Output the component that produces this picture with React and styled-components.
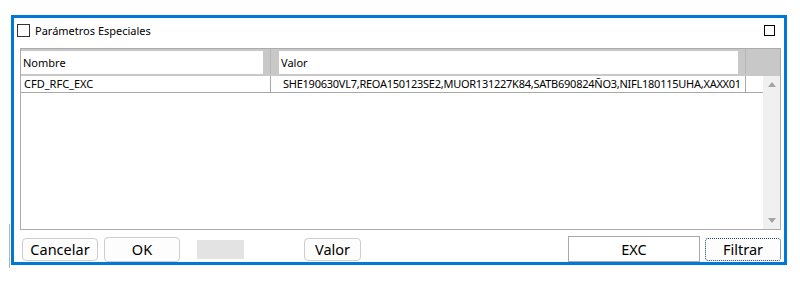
import styled, { createGlobalStyle } from "styled-components";

const GlobalStyle = createGlobalStyle`
  html, body {
    margin: 0;
    padding: 0;
    background: #ffffff;
  }
  body {
    font-family: "Noto Sans", "Open Sans", sans-serif;
    color: #000000;
  }
`;

const Page = styled.div`
  width: 800px;
  height: 281px;
  padding: 15px 0 0 11px;
  box-sizing: border-box;
`;

const Window = styled.div`
  position: relative;
  width: 776px;
  height: 250px;
  box-sizing: border-box;
  border: 3px solid #0078d7;
  background: #ffffff;
  display: flex;
  flex-direction: column;

  &::before {
    content: "";
    position: absolute;
    left: -5px;
    top: 206px;
    width: 1px;
    height: 44px;
    background: #b4b4b4;
  }
`;

const TitleBar = styled.div`
  height: 25px;
  margin-bottom: 5px;
  padding: 0 9px 0 3px;
  display: flex;
  align-items: center;
  gap: 5px;
`;

const CheckBox = styled.span`
  width: 11px;
  height: 11px;
  border: 1px solid #333333;
  background: #ffffff;
`;

const Title = styled.span`
  flex: 1;
  font-size: 11px;
  line-height: 14px;
`;

const MaxBox = styled.span`
  width: 9px;
  height: 9px;
  border: 1px solid #000000;
`;

const Table = styled.div`
  height: 182px;
  margin: 0 3px 0 6px;
  border: 1px solid #ababab;
  box-sizing: border-box;
  display: flex;
  flex-direction: column;
`;

const HeaderRow = styled.div`
  height: 27px;
  flex: none;
  background: #c8c8c8;
  display: flex;
  align-items: flex-start;
  padding-top: 2px;
  box-sizing: border-box;
`;

const HeaderCell = styled.div`
  width: ${(p) => p.$w}px;
  height: 23px;
  background: #ffffff;
  font-size: 11px;
  line-height: 23px;
  padding-left: 2px;
  box-sizing: border-box;
`;

const HeaderGap = styled.div`
  width: ${(p) => p.$w}px;
  height: 25px;
  margin-top: -2px;
  display: flex;
  padding-left: ${(p) => p.$line}px;
  box-sizing: border-box;

  &::after {
    content: "";
    width: 1px;
    height: 100%;
    background: #b6b6b6;
  }
`;

const Body = styled.div`
  flex: 1;
  display: flex;
  min-height: 0;
`;

const Grid = styled.div`
  flex: 1;
`;

const Row = styled.div`
  height: 16px;
  border-bottom: 1px solid #a8a8a8;
  display: flex;
`;

const Cell = styled.div`
  width: ${(p) => p.$w}px;
  border-right: 1px solid #a8a8a8;
  padding-left: ${(p) => p.$pad}px;
  box-sizing: border-box;
  font-size: 11px;
  letter-spacing: ${(p) => p.$ls || 0}px;
  line-height: 16px;
  white-space: nowrap;
  overflow: hidden;
`;

const ScrollBar = styled.div`
  width: 17px;
  background: #f0f0f0;
  display: flex;
  flex-direction: column;
  justify-content: space-between;
  align-items: center;
  padding: 6px 0 6px;
  box-sizing: border-box;
`;

const Arrow = styled.span`
  width: 0;
  height: 0;
  border-left: 4px solid transparent;
  border-right: 4px solid transparent;
  ${(p) =>
    p.$down
      ? "border-top: 5px solid #a3a3a3;"
      : "border-bottom: 5px solid #a3a3a3;"}
`;

const Footer = styled.div`
  flex: 1;
  display: flex;
  align-items: center;
  padding: 6px 0 0 8px;
`;

const Button = styled.div`
  width: ${(p) => p.$w}px;
  height: ${(p) => p.$h || 23}px;
  margin-left: ${(p) => p.$ml || 0}px;
  box-sizing: border-box;
  border: 1px solid #cdcdcd;
  border-radius: 4px;
  background: #fdfdfd;
  font-size: 14.5px;
  display: flex;
  align-items: center;
  justify-content: center;
  padding-bottom: 1px;
`;

const FlatButton = styled(Button)`
  border: 1px solid #a9a9a9;
  border-radius: 0;
  background: #ffffff;
`;

const FocusButton = styled(Button)`
  border: 1px dotted #1d3f6e;
  border-radius: 3px;
`;

const Blank = styled.div`
  width: 47px;
  height: 19px;
  margin-left: 17px;
  background: #e3e3e3;
`;

export default function App() {
  return (
    <>
      <GlobalStyle />
      <Page>
        <Window>
          <TitleBar>
            <CheckBox />
            <Title>Parámetros Especiales</Title>
            <MaxBox />
          </TitleBar>
          <Table>
            <HeaderRow>
              <HeaderCell $w={242}>Nombre</HeaderCell>
              <HeaderGap $w={16} $line={7} />
              <HeaderCell $w={459}>Valor</HeaderCell>
              <HeaderGap $w={10} $line={7} />
            </HeaderRow>
            <Body>
              <Grid>
                <Row>
                  <Cell $w={250} $pad={3}>CFD_RFC_EXC</Cell>
                  <Cell $w={475} $pad={12} $ls={-0.25}>
                    SHE190630VL7,REOA150123SE2,MUOR131227K84,SATB690824ÑO3,NIFL180115UHA,XAXX01
                  </Cell>
                </Row>
              </Grid>
              <ScrollBar>
                <Arrow />
                <Arrow $down />
              </ScrollBar>
            </Body>
          </Table>
          <Footer>
            <Button $w={76}>Cancelar</Button>
            <Button $w={76} $h={25} $ml={6}>OK</Button>
            <Blank />
            <Button $w={57} $ml={60}>Valor</Button>
            <FlatButton $w={132} $h={26} $ml={207}>EXC</FlatButton>
            <FocusButton $w={76} $ml={5}>Filtrar</FocusButton>
          </Footer>
        </Window>
      </Page>
    </>
  );
}
